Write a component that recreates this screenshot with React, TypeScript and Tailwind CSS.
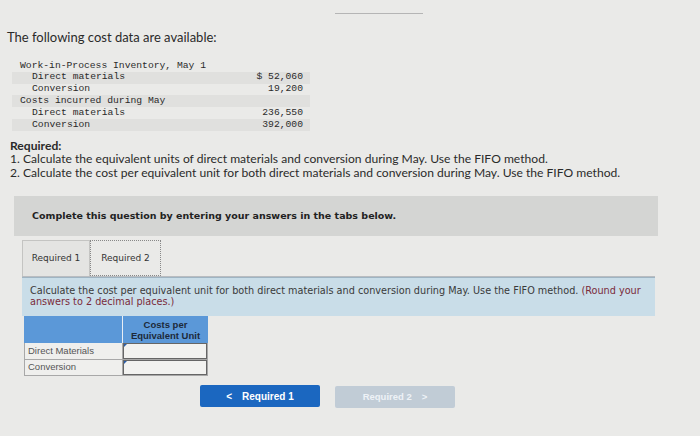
import React from "react";

const mono = { fontFamily: '"Liberation Mono", "DejaVu Sans Mono", monospace' };

function Row({ label, value, indent, stripe }: { label: string; value?: string; indent?: boolean; stripe?: boolean }) {
  return (
    <div className={`flex h-[11.8px] items-center w-[298px] ${stripe ? "bg-[#e0e0de]" : ""}`}>
      <div className={`flex-1 ${indent ? "pl-[20px]" : "pl-[8px]"}`}>{label}</div>
      <div className="pr-[7px] text-right whitespace-pre">{value ?? ""}</div>
    </div>
  );
}

export default function App() {
  return (
    <div className="w-[700px] h-[436px] bg-[#eaeae8] overflow-hidden text-[#222]" style={{ fontFamily: 'Lato, "Open Sans", sans-serif' }}>
      <div className="pt-[13px] pl-[335px]">
        <div className="w-[88px] h-[1px] bg-[#b5b5b5]" />
      </div>
      <div className="mt-[15px] pl-[7px] text-[13px] leading-[16px] text-[#2a2a2a]">The following cost data are available:</div>
      <div className="mt-[15px] ml-[12px] text-[9.7px] text-[#2a2a2a]" style={mono}>
        <Row label="Work-in-Process Inventory, May 1" />
        <Row label="Direct materials" value="$ 52,060" indent stripe />
        <Row label="Conversion" value="19,200" indent />
        <Row label="Costs incurred during May" stripe />
        <Row label="Direct materials" value="236,550" indent />
        <Row label="Conversion" value="392,000" indent stripe />
      </div>
      <div className="mt-[8px] pl-[10px] text-[12.1px] leading-[13.5px] text-[#2a2a2a]">
        <div className="font-bold">Required:</div>
        <div>1. Calculate the equivalent units of direct materials and conversion during May. Use the FIFO method.</div>
        <div>2. Calculate the cost per equivalent unit for both direct materials and conversion during May. Use the FIFO method.</div>
      </div>
      <div className="mt-[17px] ml-[14px] w-[644px] h-[40px] bg-[#d4d5d3] flex items-center pl-[18px]">
        <span className="text-[9.5px] font-bold text-[#222]" style={{ fontFamily: '"DejaVu Sans", Verdana, sans-serif' }}>
          Complete this question by entering your answers in the tabs below.
        </span>
      </div>
      <div className="ml-[22px] mt-[4px] w-[633px]" style={{ fontFamily: '"DejaVu Sans", Verdana, sans-serif' }}>
        <div className="flex h-[37px] border-b border-[#b9bcc0]">
          <div className="w-[68px] h-full bg-[#e4e4e2] border border-b-0 border-[#c4c4c2] flex items-center justify-center text-[9px] text-[#333]">Required 1</div>
          <div className="w-[71px] h-full border-[1.5px] border-dotted border-[#888] flex items-center justify-center text-[9px] text-[#333]">Required 2</div>
        </div>
        <div className="h-[39px] bg-[#c9dde8] border-t border-[#9fb4c2] pl-[8px] pr-[4px] pt-[8px] text-[9.7px] leading-[10.5px] text-[#3a3a3a]">
          <p>
            Calculate the cost per equivalent unit for both direct materials and conversion during May. Use the FIFO method.{" "}
            <span className="text-[#7a2b3a]">(Round your answers to 2 decimal places.)</span>
          </p>
        </div>
        <div className="ml-[2px] w-[184px] text-[9px]" style={{ fontFamily: '"Liberation Sans", Arial, sans-serif' }}>
          <div className="flex h-[27px] bg-[#5b98d8]">
            <div className="w-[99px] border-r border-[#e8eef5]" />
            <div className="flex-1 flex flex-col items-center justify-center font-bold text-[#1d2a3a] leading-[11px] text-[9.5px]">
              <span>Costs per</span>
              <span>Equivalent Unit</span>
            </div>
          </div>
          {["Direct Materials", "Conversion"].map((l) => (
            <div key={l} className="flex h-[16.5px] border border-t-0 border-[#a8a8a8] bg-[#efefed]">
              <div className="w-[98px] border-r border-[#a8a8a8] pl-[3px] flex items-center text-[#555] text-[9.5px]">{l}</div>
              <div className="flex-1 relative bg-[#f2f2f0] border-[1.5px] border-[#666]">
                <div className="absolute left-0 top-0 w-0 h-0 border-t-[3px] border-r-[3px] border-t-[#2b5ea8] border-r-transparent" />
              </div>
            </div>
          ))}
        </div>
      </div>
      <div className="flex mt-[9px] ml-[200px] gap-[15px]" style={{ fontFamily: '"Liberation Sans", Arial, sans-serif' }}>
        <div className="w-[120px] h-[22px] bg-[#1b67c0] rounded-[2px] flex items-center justify-center text-white text-[10px] font-bold gap-[10px]">
          <span className="text-[10px]">&lt;</span>
          <span>Required 1</span>
        </div>
        <div className="mt-[1px] w-[120px] h-[22px] bg-[#c1ccd6] rounded-[2px] flex items-center justify-center text-[#eef2f6] text-[9.5px] font-bold gap-[10px]">
          <span>Required 2</span>
          <span>&gt;</span>
        </div>
      </div>
    </div>
  );
}
